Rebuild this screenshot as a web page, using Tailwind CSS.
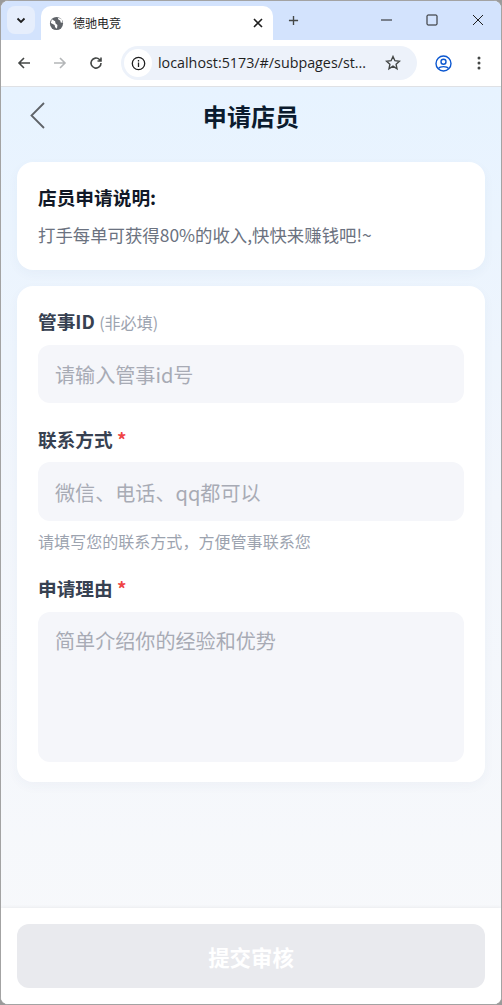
<!DOCTYPE html>
<html lang="zh-CN">
<head>
    <meta charset="UTF-8">
    <meta name="viewport" content="width=device-width, initial-scale=1.0">
    <title>德驰电竞</title>
    <script src="https://cdn.jsdelivr.net/npm/@tailwindcss/browser@4"></script>
</head>
<body class="bg-[#9a9a9a] font-['Noto_Sans_CJK_SC','Noto_Sans',sans-serif]">
<div class="w-[502px] h-[1005px] overflow-hidden">
<div class="w-full h-full border border-[#a3a3a3] rounded-[8px] overflow-hidden flex flex-col bg-white">

    <!-- Tab strip -->
    <div class="h-[39px] shrink-0 bg-[#d3e3fd] flex items-start relative">
        <div class="ml-[6px] mt-[5px] w-[28px] h-[28px] rounded-[8px] bg-[#e6eefc] flex items-center justify-center">
            <svg width="12" height="12" viewBox="0 0 12 12" fill="none" stroke="#1f1f1f" stroke-width="1.8"><path d="M2.5 4.5 6 8l3.5-3.5"/></svg>
        </div>
        <div class="ml-[6px] mt-[5px] w-[232px] h-[34px] bg-white rounded-t-[10px] flex items-center pl-[8px] pr-[10px]">
            <svg width="15" height="15" viewBox="0 0 16 16"><circle cx="8" cy="8" r="7" fill="#5f6368"/><path d="M3 3.500 6.500 5.500 7 8l2 1.500-.5 4L6.500 12 6 9.500 2 7.500zM9.500 1.800l.5 2 2 1 .5 2 2 .5-1-4z" fill="#fff"/></svg>
            <span class="ml-[9px] text-[12px] text-[#1f1f1f] leading-none">德驰电竞</span>
            <svg class="ml-auto" width="10" height="10" viewBox="0 0 10 10" stroke="#1f1f1f" stroke-width="1.600"><path d="M1 1l8 8M9 1l-8 8"/></svg>
        </div>
        <svg class="ml-[15px] mt-[14px]" width="11" height="11" viewBox="0 0 12 12" stroke="#444746" stroke-width="1.500"><path d="M6 1v10M1 6h10"/></svg>
        <div class="ml-auto flex items-center mt-[13px]">
            <svg class="mr-[34px]" width="11" height="12" viewBox="0 0 11 12" stroke="#1f1f1f" stroke-width="1"><path d="M0 6h11"/></svg>
            <svg class="mr-[34px]" width="12" height="12" viewBox="0 0 12 12" fill="none" stroke="#1f1f1f" stroke-width="1"><rect x="1" y="1" width="10" height="10" rx="1"/></svg>
            <svg class="mr-[17px]" width="12" height="12" viewBox="0 0 12 12" stroke="#1f1f1f" stroke-width="1"><path d="M1 1l10 10M11 1 1 11"/></svg>
        </div>
    </div>

    <!-- Toolbar -->
    <div class="h-[47px] shrink-0 bg-white border-b border-[#dfe1e5] flex items-center">
        <svg class="ml-[16px]" width="14" height="14" viewBox="0 0 14 14" fill="none" stroke="#444746" stroke-width="1.600"><path d="M13 7H2M7 2 2 7l5 5"/></svg>
        <svg class="ml-[22px]" width="14" height="14" viewBox="0 0 14 14" fill="none" stroke="#b4b6b8" stroke-width="1.600"><path d="M1 7h11M7 2l5 5-5 5"/></svg>
        <svg class="ml-[22px]" width="14" height="14" viewBox="0 0 14 14" fill="none" stroke="#444746" stroke-width="1.600"><path d="M12 7a5 5 0 1 1-1.500-3.500L12 5M12 1.500V5H8.500"/></svg>
        <div class="ml-[18px] w-[296px] h-[34px] rounded-full bg-[#edf2fa] flex items-center pl-[3px]">
            <div class="w-[28px] h-[28px] rounded-full bg-white flex items-center justify-center">
                <svg width="15" height="15" viewBox="0 0 15 15" fill="none" stroke="#1f1f1f" stroke-width="1.300"><circle cx="7.500" cy="7.500" r="6.200"/><path d="M7.500 6.500v4.500M7.500 4v1.400"/></svg>
            </div>
            <span class="ml-[6px] text-[14.3px] text-[#1f1f1f] leading-none font-['Open_Sans']">localhost:5173/#/subpages/st...</span>
            <svg class="ml-auto mr-[16px]" width="16" height="16" viewBox="0 0 16 16" fill="none" stroke="#444746" stroke-width="1.400"><path d="M8 1.500l1.900 4.200 4.600.5-3.400 3.100.9 4.500L8 11.100l-4 2.700.9-4.500L1.500 6.200l4.600-.5z"/></svg>
        </div>
        <svg class="ml-[18px]" width="17" height="17" viewBox="0 0 17 17" fill="none" stroke="#0b57d0" stroke-width="1.400"><circle cx="8.500" cy="8.500" r="7.500"/><circle cx="8.500" cy="6.800" r="2.500"/><path d="M3.500 13.500c1.500-2.500 8.500-2.500 10 0"/></svg>
        <svg class="ml-[25px]" width="4" height="14" viewBox="0 0 4 14" fill="#444746"><circle cx="2" cy="2" r="1.500"/><circle cx="2" cy="7" r="1.500"/><circle cx="2" cy="12" r="1.500"/></svg>
    </div>

    <!-- Page -->
    <div class="flex-1 min-h-0 flex flex-col bg-gradient-to-b from-[#e7f3ff] via-[#f2f6fc] via-[45%] to-[#f8f9fb]">
        <header class="h-[62px] shrink-0 flex items-center relative">
            <svg class="absolute left-[28px] top-[15px]" width="17" height="27" viewBox="0 0 17 27" fill="none" stroke="#5f6368" stroke-width="1.800"><path d="M15 1 2.500 13.500 15 26"/></svg>
            <h1 class="w-full text-center text-[24.1px] font-bold text-[#0b1b2e] leading-none mt-[-4px]">申请店员</h1>
        </header>

        <div class="px-[16px] pt-[13px] flex flex-col gap-[16px] flex-1 min-h-0">
            <section class="h-[108px] bg-white rounded-[16px] px-[21px] pt-[24px] shadow-[0_4px_12px_rgba(40,80,140,0.04)]">
                <h2 class="text-[18.7px] font-bold text-[#111827] leading-[22px]">店员申请说明:</h2>
                <p class="mt-[17px] text-[17.4px] text-[#6b7280] leading-[20px]">打手每单可获得80%的收入,快快来赚钱吧!~</p>
            </section>

            <section class="h-[496px] bg-white rounded-[16px] px-[21px] pt-[23px] shadow-[0_4px_12px_rgba(40,80,140,0.04)]">
                <label class="block text-[18.7px] font-bold text-[#374151] leading-[24px]">管事ID <span class="text-[16.06px] font-normal text-[#9ca3af]">(非必填)</span></label>
                <div class="mt-[11px] h-[58px] rounded-[12px] bg-[#f5f6fa] px-[17px] pt-[2px] flex items-center text-[20.08px] text-[#a8abb5]">请输入管事id号</div>

                <label class="block mt-[24px] text-[18.7px] font-bold text-[#374151] leading-[24px]">联系方式 <span class="text-[#ef4444]">*</span></label>
                <div class="mt-[11px] h-[59px] rounded-[12px] bg-[#f5f6fa] px-[17px] pt-[3px] flex items-center text-[20.08px] text-[#a8abb5]">微信、电话、qq都可以</div>
                <p class="mt-[10px] text-[16.06px] text-[#9ca3af] leading-[20px]">请填写您的联系方式，方便管事联系您</p>

                <label class="block mt-[25px] text-[18.7px] font-bold text-[#374151] leading-[24px]">申请理由 <span class="text-[#ef4444]">*</span></label>
                <div class="mt-[12px] h-[150px] rounded-[12px] bg-[#f5f6fa] px-[17px] pt-[16px] text-[20.08px] leading-[26px] text-[#a8abb5]">简单介绍你的经验和优势</div>
            </section>
        </div>

        <footer class="h-[96px] shrink-0 bg-white px-[16px] pt-[16px] shadow-[0_-1px_3px_rgba(0,0,0,0.05)]">
            <button class="w-full h-[64px] pt-[2px] rounded-[12px] bg-[#e9eaee] text-white text-[21.4px] font-bold">提交审核</button>
        </footer>
    </div>
</div>
</div>
</body>
</html>
